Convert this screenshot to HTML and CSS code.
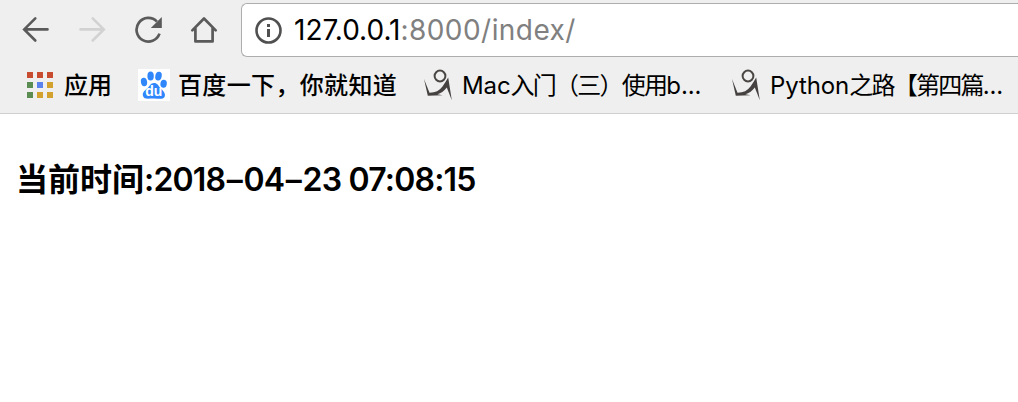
FILE: index.html
```html
<!DOCTYPE html>
<html lang="zh-CN">
<head>
<meta charset="utf-8">
<title>127.0.0.1:8000/index/</title>
<link rel="stylesheet" href="styles.css">
</head>
<body>
<svg class="defs" width="0" height="0" aria-hidden="true">
  <symbol id="runner" viewBox="0 0 32 32">
    <circle cx="17" cy="7" r="5.4" fill="none" stroke="#4a4644" stroke-width="2"/>
    <path d="M1 10 L6.5 23.7 Q15 23.8 19.5 17.5 Q23 12.5 25.2 8.6 L28.8 31.3 L23.8 18.4 Q19.5 23.8 14.5 25.2 L19.5 26.2 L4.8 26.8 Z" fill="#454140"/>
  </symbol>
</svg>
<header class="chrome">
  <div class="toolbar">
    <nav class="nav">
      <svg width="28" height="28" viewBox="0 0 28 28"><path d="M25.5 13.4H2.5M13.3 2.3L2.2 13.4L13.3 24.5" fill="none" stroke="#5a5a5a" stroke-width="2.6" stroke-linecap="round"/></svg>
      <svg width="28" height="28" viewBox="0 0 28 28"><path d="M2.5 13.4H25.5M14.7 2.3L25.8 13.4L14.7 24.5" fill="none" stroke="#d2d2d2" stroke-width="2.6" stroke-linecap="round"/></svg>
      <svg width="28" height="28" viewBox="0 0 28 28"><path d="M25.5 17.6A11.8 11.8 0 1 1 22.9 5.6" fill="none" stroke="#5a5a5a" stroke-width="2.7"/><path d="M27.8 1V12H16.8Z" fill="#5a5a5a"/></svg>
      <svg width="28" height="28" viewBox="0 0 28 28"><path d="M2.3 14.4L14 2.5L25.7 14.4M5.4 12V25.4H22.6V12" fill="none" stroke="#5a5a5a" stroke-width="2.7" stroke-linecap="round" stroke-linejoin="round"/></svg>
    </nav>
    <div class="address">
      <svg width="28" height="28" viewBox="0 0 28 28"><circle cx="14.5" cy="14.5" r="12" fill="none" stroke="#505050" stroke-width="2.6"/><path d="M13 8h3v3h-3zM13 13h3v8h-3z" fill="#505050"/></svg>
      <div class="url"><span class="host">127.0.0.1</span><span class="path">:8000/index/</span></div>
    </div>
  </div>
  <div class="bookmarks">
    <div class="bookmark apps">
      <svg width="26" height="26" viewBox="0 0 26 26"><path d="M0 0h6v6H0zM10 0h6v6h-6zM20 0h6v6h-6z" fill="#c74c30"/><path d="M0 10h6v6H0zM0 20h6v6H0z" fill="#5b8d52"/><path d="M10 10h6v6h-6z" fill="#5b82ec"/><path d="M20 10h6v6h-6zM10 20h6v6h-6zM20 20h6v6h-6z" fill="#d2a12e"/></svg>
      <span class="label">应用</span>
    </div>
    <div class="bookmark baidu">
      <svg width="32" height="32" viewBox="0 0 32 32"><path d="M0 0h32v32H0z" fill="#fff"/><g fill="#2f87fb"><ellipse cx="12.6" cy="7" rx="3.2" ry="4.5"/><ellipse cx="20.5" cy="7.1" rx="3.2" ry="4.4" transform="rotate(12 20.5 7.1)"/><ellipse cx="6" cy="13" rx="3.1" ry="4.2" transform="rotate(-10 6 13)"/><ellipse cx="25.6" cy="14.8" rx="3.2" ry="4" transform="rotate(8 25.6 14.8)"/><path d="M16 14C12.5 14 12 17 9.3 19.3C6 22 4.2 24 5 27C6 30.6 10 29.5 15.8 29.5S25.7 31 26.8 27.2C27.7 23.8 25 21.8 22.5 19.2C20 16.5 19.5 14 16 14Z"/></g><text x="15.8" y="27.3" text-anchor="middle" class="du">du</text></svg>
      <span class="label wide">百度一下，你就知道</span>
    </div>
    <div class="bookmark mac">
      <svg width="32" height="32"><use href="#runner"/></svg>
      <span class="label mixed"><span class="latin">Mac</span><span class="tight">入门（三）使用</span><span class="latin">b...</span></span>
    </div>
    <div class="bookmark python">
      <svg width="32" height="32"><use href="#runner"/></svg>
      <span class="label mixed"><span class="latin">Python</span><span class="tight">之路【第四篇</span><span class="latin">...</span></span>
    </div>
  </div>
</header>
<main class="page">
  <h1 class="time">当前时间<span class="stamp">:2018<span class="dash">–</span>04<span class="dash">–</span>23 07:08:15</span></h1>
</main>
</body>
</html>
```
FILE: styles.css
```css
* { box-sizing: border-box; }
body {
  margin: 0;
  background: #fff;
  color: #000;
  font-family: "Inter", "Noto Sans CJK SC", sans-serif;
  overflow: hidden;
}
svg { display: block; flex: none; }
.defs { position: absolute; }
.chrome {
  height: 114px;
  padding-top: 3px;
  background: #efefef;
  border-bottom: 1px solid #cfcfcf;
}
.toolbar { display: flex; height: 54px; }
.nav {
  display: flex;
  align-items: center;
  gap: 28px;
  width: 241px;
  padding-left: 22px;
}
.address {
  display: flex;
  align-items: center;
  flex: 1;
  gap: 12px;
  padding-left: 12px;
  background: #fff;
  border: 1px solid #adadad;
  border-right: 0;
  border-radius: 6px 0 0 6px;
}
.url { font-size: 28px; line-height: 40px; white-space: nowrap; }
.host { letter-spacing: 0; }
.path { color: #808080; letter-spacing: 0.45px; }
.bookmarks { display: flex; height: 56px; }
.bookmark { display: flex; align-items: center; white-space: nowrap; }
.apps { width: 111px; padding-left: 27px; gap: 11px; }
.baidu { width: 285px; padding-left: 27px; gap: 8px; }
.mac { width: 308px; padding-left: 27px; gap: 7px; }
.python { padding-left: 27px; gap: 7px; }
.label {
  padding-bottom: 2px;
  font-family: "Noto Sans CJK SC", sans-serif;
  font-size: 24px;
  font-weight: 500;
  line-height: 36px;
}
.mixed { padding-bottom: 0; font-weight: 400; }
.wide { letter-spacing: 0.35px; }
.latin { font-family: "Inter", sans-serif; letter-spacing: -0.1px; }
.tight { letter-spacing: -1.75px; }
.du { fill: #fff; font: bold 14px "Liberation Sans", sans-serif; }
.page { padding: 42px 16px; }
.time {
  margin: 0;
  font: 700 32px/42px "Noto Sans CJK SC", sans-serif;
  white-space: nowrap;
}
.stamp { font-family: "Inter", sans-serif; font-weight: 600; letter-spacing: -0.8px; }
.dash { margin: 0 1.5px; }
```
